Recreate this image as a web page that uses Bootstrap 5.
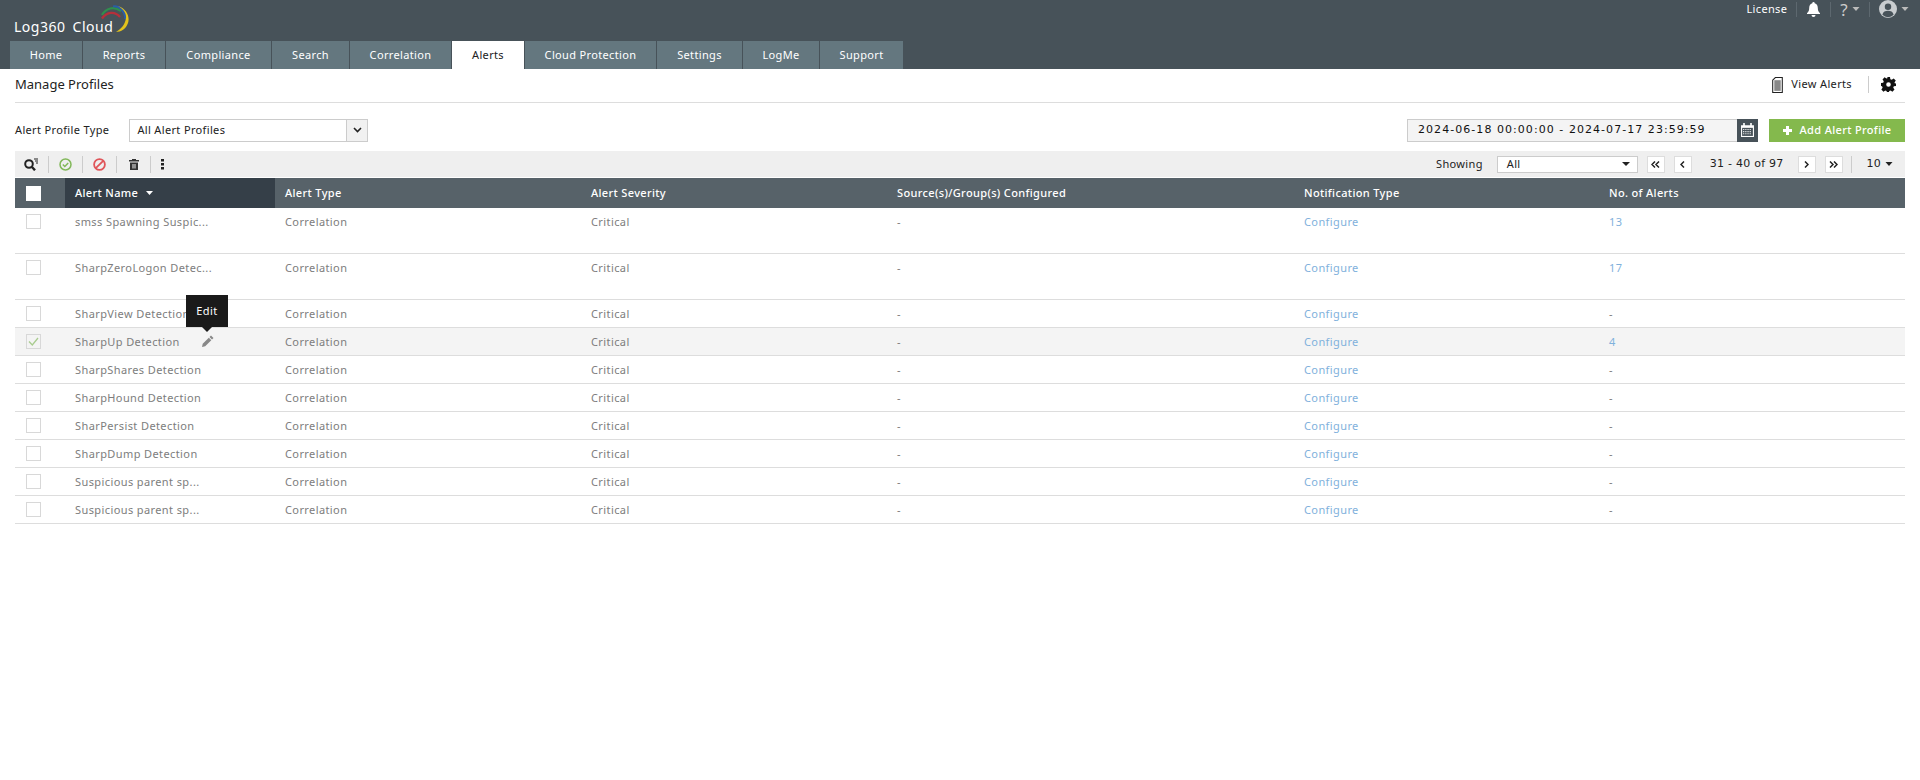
<!DOCTYPE html>
<html lang="en"><head><meta charset="utf-8"><title>Manage Profiles</title>
<link href="https://cdn.jsdelivr.net/npm/bootstrap@5.3.0/dist/css/bootstrap.min.css" rel="stylesheet">
<style>
body{font-family:"Noto Sans","Open Sans",sans-serif;font-size:11px;letter-spacing:.35px;color:#222;background:#fff;min-height:780px}
svg{display:block;flex:none}
.top-bar{height:69px;background:#475259;padding-left:10px}
.brand-area{height:41px;padding:0 0 0 4px}
.brand-name{font-size:14px;color:#fff;letter-spacing:.5px;margin-top:17px;line-height:20px;word-spacing:3px}
.brand-arc{margin:5px 0 0 -12px}
.top-links{color:#fff;height:18px;padding-right:11px}
.top-links .sep{width:1px;height:15px;background:#5d686f}
.gap-links{gap:9px}
.help-mark{font-size:17px;color:#ccc;line-height:1}
.main-tabs{height:28px}
.tab-item{background:#64777f;color:#fff;height:28px;line-height:28px;text-align:center;margin-right:1px}
.tab-item.on{background:#fff;color:#222}
.title-row{height:34px;margin:0 15px;border-bottom:1px solid #ddd;padding:0 9px 2px 0}
.title-text{font-size:13px;letter-spacing:0}
.view-link .sep{width:1px;height:17px;background:#ccc}
.filter-row{margin:15px 15px 0;height:24px}
.type-box{width:239px;height:23px;border:1px solid #ccc;margin-left:20px}
.type-box span:first-child{padding-left:7px}
.type-caret{width:21px;height:21px;background:#f1f1f1;border-left:1px solid #ccc}
.date-box{width:330px;height:23px;border:1px solid #ccc;border-right:0;background:#f4f4f4;color:#111;padding-left:10px;font-family:"DejaVu Sans",sans-serif;font-size:11px;letter-spacing:1.05px}
.cal-btn{width:21px;height:23px;background:#475259}
.add-btn{width:136px;height:23px;background:#84b94d;color:#fff;margin-left:11px;font-weight:500}
.tool-row{margin:9px 15px 0;height:26px;background:#efefef;padding:0 12px 0 9px}
.tool-left{gap:10px}
.tool-ico{width:13px;display:flex;justify-content:center}
.tool-row .sep{width:1px;height:17px;background:#ccc}
.show-select{width:141px;height:17px;background:#fff;border:1px solid #ccc;padding:0 7px 0 9px;margin-left:14px}
.page-btn{width:18px;height:17px;background:#fff;border:1px solid #ddd;margin-left:9px}
.page-info{font-family:"DejaVu Sans",sans-serif;letter-spacing:.25px;margin:0 5px 0 18px}
.page-size{font-family:"DejaVu Sans",sans-serif;letter-spacing:.2px;margin-left:15px}
.alert-grid{width:1890px;margin:1px 15px 0;table-layout:fixed;border-collapse:collapse}
.alert-grid th{background:#576269;color:#fff;height:30px;padding:0 0 0 10px;font-weight:500;vertical-align:middle}
.alert-grid th.sorted{background:#353f48}
.alert-grid td{color:#7d7d7d;letter-spacing:.4px;padding:6px 0 0 10px;vertical-align:top;border-bottom:1px solid #ddd;height:28px;line-height:15px}
.alert-grid tr.tall td{height:46px}
.alert-grid tr.first-row td{height:45px}
.alert-grid tr.picked td{background:#f4f4f4}
.alert-grid td:first-child,.alert-grid th:first-child{padding-left:11px}
.alert-grid a{color:#7fb1dc;text-decoration:none}
.tick{width:15px;height:15px;border:1px solid #d8d8d8;background:#fff;display:block}
.tick.head{border:0;background:#fff}
.name-cell{position:relative}
.edit-tip{position:absolute;left:121px;top:-33px;width:42px;height:32px;background:#1a1a1a;color:#fff;text-align:center;line-height:31px;z-index:2}
.edit-tip::after{content:"";position:absolute;left:16px;bottom:-5px;border:5px solid transparent;border-top-color:#1a1a1a;border-bottom:0}
.edit-pencil{position:absolute;left:137px;top:7px}
</style></head><body>
<header class="top-bar">
  <div class="d-flex justify-content-between brand-area">
    <div class="d-flex align-items-start">
      <div class="brand-name">Log360 Cloud</div>
      <svg class="brand-arc" width="28" height="28" viewBox="0 0 28 28" fill="none"><path d="M1 10C5 3 13 1 20 6" stroke="#2f8f4e" stroke-width="2.300"/><path d="M1 13.500C6 6.500 14 6 19 12" stroke="#b5303a" stroke-width="2.300"/><path d="M12 1.500C18 0 24 6 24.500 14" stroke="#2a5ea8" stroke-width="2.200"/><path d="M17 1C26 4 29 12 27 18C25 24 20 27 15 27C20 24 24 20 25 13C25.600 8 22 4 17 1Z" fill="#e2c21c"/></svg>
    </div>
    <div class="d-flex align-items-center top-links gap-links">
      <span>License</span><span class="sep"></span>
      <svg width="15" height="15" viewBox="0 0 14 15" fill="#fff"><path d="M7 0a1.300 1.300 0 0 1 1.200 1.300C10.400 2 11.300 3.800 11.300 6c0 3 1 4 2.200 5.200V12H.5v-.8C1.700 10 2.700 9 2.700 6c0-2.200.9-4 3.100-4.700A1.300 1.300 0 0 1 7 0zM5 13h4a2 2 0 0 1-4 0z"/></svg>
      <span class="sep"></span>
      <span class="d-flex align-items-center help-mark">?<svg class="ms-1" width="8" height="4" viewBox="0 0 7 4" fill="#bbb"><path d="M0 0h7L3.500 4z"/></svg></span>
      <span class="sep"></span>
      <span class="d-flex align-items-center"><svg width="18" height="18" viewBox="0 0 15 15"><circle cx="7.500" cy="7.500" r="7.500" fill="#c9cdd0"/><circle cx="7.500" cy="5.700" r="2.700" fill="#475259"/><path d="M2.800 12.300c.6-2.500 2.500-3.300 4.700-3.300s4.100.8 4.700 3.300a6.500 6.500 0 0 1-9.400 0z" fill="#475259"/></svg><svg class="ms-1" width="8" height="4" viewBox="0 0 7 4" fill="#bbb"><path d="M0 0h7L3.500 4z"/></svg></span>
    </div>
  </div>
  <nav class="d-flex main-tabs">
    <div class="tab-item" style="width:72px">Home</div><div class="tab-item" style="width:82px">Reports</div><div class="tab-item" style="width:105px">Compliance</div><div class="tab-item" style="width:77px">Search</div><div class="tab-item" style="width:101px">Correlation</div><div class="tab-item on" style="width:72px">Alerts</div><div class="tab-item" style="width:131px">Cloud Protection</div><div class="tab-item" style="width:85px">Settings</div><div class="tab-item" style="width:76px">LogMe</div><div class="tab-item" style="width:83px">Support</div>
  </nav>
</header>
<div class="d-flex justify-content-between align-items-center title-row">
  <div class="title-text">Manage Profiles</div>
  <div class="d-flex align-items-center view-link gap-2">
    <svg width="11" height="16" viewBox="0 0 10 15"><path d="M.5 3 3 .5h6.500v14H.5z" fill="#fff" stroke="#222"/><rect x="2" y="3" width="6" height="10" fill="#888"/></svg>
    <span class="me-2">View Alerts</span><span class="sep"></span>
    <svg class="ms-1" width="15" height="15" viewBox="0 0 13 13"><path fill="#111" fill-rule="evenodd" d="M5.200 0h2.600l.3 1.900 1.200.5L11 1.300l1.800 1.800-1.100 1.600.5 1.200L13 5.200v2.600l-1.900.3-.5 1.200 1.100 1.600-1.800 1.800-1.600-1.100-1.200.5-.3 1.900H5.200l-.3-1.900-1.200-.5-1.600 1.100L.3 10.900l1.100-1.600-.5-1.200L0 7.800V5.200l1.900-.3.5-1.200L1.300 2.100 3.100.3l1.600 1.100 1.200-.5zM6.500 4.500a2 2 0 1 0 0 4 2 2 0 0 0 0-4z"/></svg>
  </div>
</div>
<div class="d-flex justify-content-between align-items-center filter-row">
  <div class="d-flex align-items-center">
    <span>Alert Profile Type</span>
    <div class="d-flex justify-content-between align-items-center type-box"><span>All Alert Profiles</span><span class="d-flex align-items-center justify-content-center type-caret"><svg width="9" height="6" viewBox="0 0 9 6" fill="none" stroke="#222" stroke-width="1.600"><path d="m1 1 3.500 3.500L8 1"/></svg></span></div>
  </div>
  <div class="d-flex align-items-center">
    <div class="d-flex align-items-center date-box">2024-06-18 00:00:00 - 2024-07-17 23:59:59</div>
    <div class="d-flex align-items-center justify-content-center cal-btn"><svg width="13" height="14" viewBox="0 0 12 13"><path fill="#fff" d="M0 2h2V0h1.500v2h5V0H10v2h2v11H0z"/><path fill="#475259" d="M1 4.500h10V12H1z"/><path stroke="#fff" stroke-dasharray="1 1" d="M2 6h8M2 8h8M2 10h8"/></svg></div>
    <div class="d-flex align-items-center justify-content-center gap-2 add-btn"><svg width="9" height="9" viewBox="0 0 9 9" fill="#fff"><path d="M3 0h3v3h3v3H6v3H3V6H0V3h3z"/></svg>Add Alert Profile</div>
  </div>
</div>
<div class="d-flex justify-content-between align-items-center tool-row">
  <div class="d-flex align-items-center tool-left">
    <svg width="14" height="13" viewBox="0 0 14 13" fill="none" stroke="#222"><circle cx="5" cy="6" r="3.800" stroke-width="2"/><path d="m8 9 3 3.300" stroke-width="2.400"/><path d="M10 1h4M11 3h3M12 5h2" stroke-width="1"/></svg>
    <span class="sep"></span>
    <span class="tool-ico"><svg width="13" height="13" viewBox="0 0 13 13" fill="none" stroke="#82b85a" stroke-width="1.500"><circle cx="6.500" cy="6.500" r="5.500"/><path d="m3.800 6.500 2 2 3.400-3.600"/></svg></span>
    <span class="sep"></span>
    <span class="tool-ico"><svg width="13" height="13" viewBox="0 0 13 13" fill="none" stroke="#e0555a" stroke-width="1.800"><circle cx="6.500" cy="6.500" r="5.400"/><path d="m2.800 10.200 7.400-7.400"/></svg></span>
    <span class="sep"></span>
    <span class="tool-ico"><svg width="10" height="11" viewBox="0 0 10 11" fill="#333"><path d="M3 0h4v1h3v1.500H0V1h3zM1 3.500h8V11H1zM3.500 5v4.500h1V5zM5.500 5v4.500h1V5z" fill-rule="evenodd"/></svg></span>
    <span class="sep"></span>
    <svg width="3" height="11" viewBox="0 0 3 11" fill="#222"><path d="M0 0h3v2.500H0zM0 4h3v2.500H0zM0 8h3v2.500H0z"/></svg>
  </div>
  <div class="d-flex align-items-center">
    <span>Showing</span>
    <div class="d-flex justify-content-between align-items-center show-select"><span>All</span><svg width="8" height="4" viewBox="0 0 8 4" fill="#222"><path d="M0 0h8L4 4z"/></svg></div>
    <div class="d-flex align-items-center justify-content-center page-btn"><svg width="9" height="7" viewBox="0 0 9 7" fill="none" stroke="#222" stroke-width="1.500"><path d="M4 .5 1 3.500l3 3M8 .5l-3 3 3 3"/></svg></div>
    <div class="d-flex align-items-center justify-content-center page-btn"><svg width="5" height="7" viewBox="0 0 5 7" fill="none" stroke="#222" stroke-width="1.500"><path d="M4 .5 1 3.500l3 3"/></svg></div>
    <span class="page-info">31 - 40 of 97</span>
    <div class="d-flex align-items-center justify-content-center page-btn"><svg width="5" height="7" viewBox="0 0 5 7" fill="none" stroke="#222" stroke-width="1.500"><path d="m1 .5 3 3-3 3"/></svg></div>
    <div class="d-flex align-items-center justify-content-center page-btn"><svg width="9" height="7" viewBox="0 0 9 7" fill="none" stroke="#222" stroke-width="1.500"><path d="m1 .5 3 3-3 3M5 .5l3 3-3 3"/></svg></div>
    <span class="sep ms-2"></span>
    <span class="d-flex align-items-center page-size">10<svg class="ms-1" width="8" height="4" viewBox="0 0 7 4" fill="#222"><path d="M0 0h7L3.500 4z"/></svg></span>
  </div>
</div>
<table class="alert-grid">
<colgroup><col style="width:50px"><col style="width:210px"><col style="width:306px"><col style="width:306px"><col style="width:407px"><col style="width:305px"><col style="width:306px"></colgroup>
<thead><tr><th><span class="tick head"></span></th><th class="sorted"><span class="d-flex align-items-center">Alert Name<svg class="ms-2" width="7" height="4" viewBox="0 0 7 4" fill="#fff"><path d="M0 0h7L3.500 4z"/></svg></span></th><th>Alert Type</th><th>Alert Severity</th><th>Source(s)/Group(s) Configured</th><th>Notification Type</th><th>No. of Alerts</th></tr></thead>
<tbody>
<tr class="first-row"><td><span class="tick"></span></td><td>smss Spawning Suspic...</td><td>Correlation</td><td>Critical</td><td>-</td><td><a href="#">Configure</a></td><td><a href="#">13</a></td></tr>
<tr class="tall"><td><span class="tick"></span></td><td>SharpZeroLogon Detec...</td><td>Correlation</td><td>Critical</td><td>-</td><td><a href="#">Configure</a></td><td><a href="#">17</a></td></tr>
<tr><td><span class="tick"></span></td><td>SharpView Detection</td><td>Correlation</td><td>Critical</td><td>-</td><td><a href="#">Configure</a></td><td>-</td></tr>
<tr class="picked"><td><span class="tick" style="background:#f4f4f4"><svg width="13" height="13" viewBox="0 0 13 13" fill="none" stroke="#a9cc8f" stroke-width="1.300"><path d="m2 6.500 3.300 3.500L11 3"/></svg></span></td><td class="name-cell">SharpUp Detection<div class="edit-tip">Edit</div><svg class="edit-pencil" width="12" height="12" viewBox="0 0 12 12" fill="#888"><path d="M9 .5 11.500 3 10 4.500 7.500 2zM6.800 2.700 9.300 5.200 3.200 11.300 0 12l.7-3.200z"/></svg></td><td>Correlation</td><td>Critical</td><td>-</td><td><a href="#">Configure</a></td><td><a href="#">4</a></td></tr>
<tr><td><span class="tick"></span></td><td>SharpShares Detection</td><td>Correlation</td><td>Critical</td><td>-</td><td><a href="#">Configure</a></td><td>-</td></tr>
<tr><td><span class="tick"></span></td><td>SharpHound Detection</td><td>Correlation</td><td>Critical</td><td>-</td><td><a href="#">Configure</a></td><td>-</td></tr>
<tr><td><span class="tick"></span></td><td>SharPersist Detection</td><td>Correlation</td><td>Critical</td><td>-</td><td><a href="#">Configure</a></td><td>-</td></tr>
<tr><td><span class="tick"></span></td><td>SharpDump Detection</td><td>Correlation</td><td>Critical</td><td>-</td><td><a href="#">Configure</a></td><td>-</td></tr>
<tr><td><span class="tick"></span></td><td>Suspicious parent sp...</td><td>Correlation</td><td>Critical</td><td>-</td><td><a href="#">Configure</a></td><td>-</td></tr>
<tr><td><span class="tick"></span></td><td>Suspicious parent sp...</td><td>Correlation</td><td>Critical</td><td>-</td><td><a href="#">Configure</a></td><td>-</td></tr>
</tbody></table>
<script src="https://cdn.jsdelivr.net/npm/bootstrap@5.3.0/dist/js/bootstrap.bundle.min.js"></script>
</body></html>
